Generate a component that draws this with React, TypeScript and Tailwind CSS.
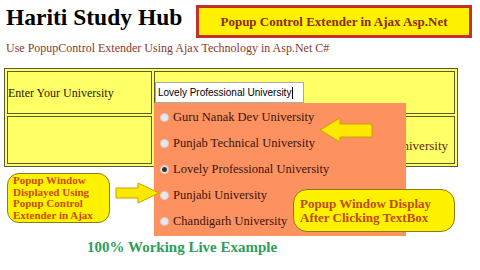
import { Fragment } from "react";

const universities = [
    { name: "Guru Nanak Dev University", checked: false },
    { name: "Punjab Technical University", checked: false },
    { name: "Lovely Professional University", checked: true },
    { name: "Punjabi University", checked: false },
    { name: "Chandigarh University", checked: false },
];

function Radio({ checked }: { checked: boolean }) {
    return (
        <span className="flex h-[9px] w-[9px] items-center justify-center rounded-full border border-[#d0d0d0] bg-[#e8e8e8]">
            {checked && <span className="h-[5px] w-[5px] rounded-full bg-[#333]" />}
        </span>
    );
}

function Arrow({ dir, className }: { dir: "left" | "right"; className: string }) {
    const d =
        dir === "left"
            ? "M1 13 L21 1 L21 7 L53 7 L53 20 L21 20 L21 25 Z"
            : "M1 6 L23 6 L23 1 L44 11 L23 21 L23 16 L1 16 Z";
    return (
        <svg className={className} viewBox={dir === "left" ? "0 0 54 26" : "0 0 45 22"}>
            <path d={d} fill="#ffe800" stroke="#c9a000" strokeWidth="1" strokeLinejoin="miter" />
        </svg>
    );
}

export default function App() {
    return (
        <div className="relative h-[270px] w-[480px] overflow-hidden bg-white font-['Liberation_Serif',serif]">
            {/* Header */}
            <div className="flex items-start">
                <h1 className="pl-[6px] pt-[2px] text-[23.5px] font-bold leading-[30px] text-black">
                    Hariti Study Hub
                </h1>
                <div className="ml-auto mr-[8px] mt-[5px] flex h-[33px] w-[276px] items-center justify-center border-[3px] border-[#c4302b] bg-[#fff200]">
                    <span className="text-[13px] font-bold text-[#8a2a10]">
                        Popup Control Extender in Ajax Asp.Net
                    </span>
                </div>
            </div>
            <p className="mt-[3px] pl-[6px] text-[12px] leading-[14px] text-[#8b3a2a]">
                Use PopupControl Extender Using Ajax Technology in Asp.Net C#
            </p>

            {/* Table */}
            <table className="ml-[4px] mt-[13px] w-[454px] border-separate border-spacing-[2px] border border-[#5b5b30] bg-[#ffff66]">
                <tbody>
                    <tr className="h-[43px]">
                        <td className="w-[145px] border border-[#5b5b30] bg-[#ffff66] p-0 text-[12px] text-[#2a1a0a]">
                            Enter Your University
                        </td>
                        <td className="border border-[#5b5b30] bg-[#ffff66] p-0">
                            <div className="flex h-[21px] w-[149px] items-center border border-[#aaa] bg-white pl-[2px] font-['Liberation_Sans',sans-serif] text-[10px] text-black">
                                Lovely Professional University<span className="ml-px h-[12px] w-px bg-black" />
                            </div>
                        </td>
                    </tr>
                    <tr className="h-[48px]">
                        <td className="border border-[#5b5b30] bg-[#ffff66] p-0" />
                        <td className="border border-[#5b5b30] bg-[#ffff66] p-0 pr-[6px] pt-[12px]">
                            <div className="ml-auto flex w-[48px] justify-end overflow-hidden whitespace-nowrap text-[13px] text-[#5a2a10]">
                                Lovely Professional University
                            </div>
                        </td>
                    </tr>
                </tbody>
            </table>

            {/* Popup panel */}
            <div className="absolute left-[154px] top-[103px] flex h-[133px] w-[252px] flex-col bg-[#fd9260] pl-[6px] pt-[1px]">
                {universities.map((u) => (
                    <Fragment key={u.name}>
                        <div className="flex h-[26px] items-center gap-[4px] text-[12.5px] text-[#3a140a]">
                            <Radio checked={u.checked} />
                            <span>{u.name}</span>
                        </div>
                    </Fragment>
                ))}
            </div>

            {/* Annotations */}
            <Arrow dir="left" className="absolute left-[319px] top-[117px] h-[26px] w-[54px]" />
            <Arrow dir="right" className="absolute left-[115px] top-[182px] h-[22px] w-[45px]" />

            <div className="absolute left-[7px] top-[173px] flex h-[50px] w-[103px] flex-col justify-center rounded-[12px] border border-[#8a7a20] bg-[#fff200] pl-[5px] text-[11px] font-bold leading-[11.5px] text-[#cc4a00]">
                <span>Popup Window</span>
                <span>Displayed Using</span>
                <span>Popup Control</span>
                <span>Extender in Ajax</span>
            </div>

            <div className="absolute left-[293px] top-[189px] flex h-[43px] w-[162px] flex-col justify-center rounded-[14px] border border-[#8a7a20] bg-[#fff200] pl-[6px] text-[13px] font-bold leading-[14px] text-[#c04a0a]">
                <span>Popup Window Display</span>
                <span>After Clicking TextBox</span>
            </div>

            <p className="absolute left-[87px] top-[237px] text-[15px] font-bold leading-[20px] text-[#2e9e5a]">
                100% Working Live Example
            </p>
        </div>
    );
}
